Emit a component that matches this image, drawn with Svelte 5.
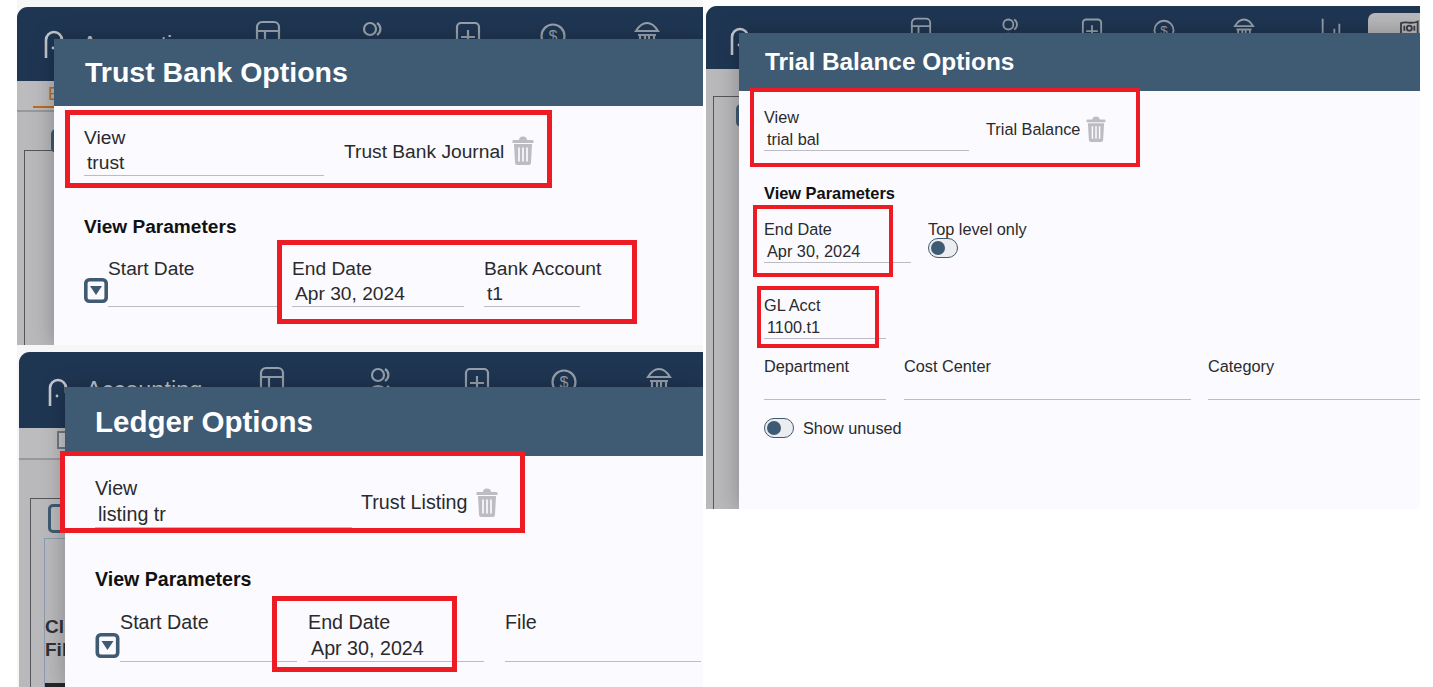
<script>
  const navIcons = ['table', 'people', 'plus', 'dollar', 'bank'];
</script>

{#snippet icon(name)}
  <svg class="nav-icon" viewBox="0 0 26 30" fill="none" stroke="currentColor" stroke-width="2.2">
    {#if name === 'table'}
      <path d="M2 29V7a5 5 0 0 1 5-5h12a5 5 0 0 1 5 5v22M2 11h22M10 11v18" />
    {:else if name === 'people'}
      <circle cx="11" cy="9" r="6" />
      <path d="M18 3a7 7 0 0 1 0 12M2 29a9 9 0 0 1 18 0M20 20a8 8 0 0 1 4 9" />
    {:else if name === 'plus'}
      <path d="M2 29V7a4 4 0 0 1 4-4h14a4 4 0 0 1 4 4v22M13 10v14M6 17h14" />
    {:else if name === 'dollar'}
      <circle cx="13" cy="16" r="11.5" />
      <text x="13" y="22" font-size="16" text-anchor="middle" fill="currentColor" stroke="none">$</text>
    {:else if name === 'bank'}
      <path d="M2 11c3-5 7-8 11-8s8 3 11 8zM4 15h18M6 15v13M11 15v13M15 15v13M20 15v13M2 29h22" />
    {:else if name === 'bars'}
      <path d="M3 2v27M11 20v9M17 14v15M23 8v21" />
    {:else if name === 'money'}
      <path d="M1 5c7-3 12 2 20-2v15c-7 3-13-2-20 1z" />
      <circle cx="11" cy="11" r="3" />
      <path d="M5 8v6M17 8v6" />
    {/if}
  </svg>
{/snippet}

{#snippet logo()}
  <div class="brand">
    <svg class="logo" viewBox="0 0 20 28" fill="none" stroke="#c3c8cd" stroke-width="2.6">
      <path d="M2 28V10a8 8 0 0 1 16 0v5" />
      <circle cx="9" cy="18" r="1.4" fill="#c3c8cd" stroke="none" />
    </svg>
    <span class="app-name">Accounting</span>
  </div>
{/snippet}

{#snippet trash()}
  <svg class="trash" viewBox="0 0 22 29">
    <path d="M7 4a4 3.5 0 0 1 8 0h5.5a1 1 0 0 1 1 1v2h-21V5a1 1 0 0 1 1-1z" fill="#bcbcc2" />
    <path d="M2 8h18l-1 18.500a2.500 2.500 0 0 1-2.500 2.500h-11a2.500 2.500 0 0 1-2.500-2.500z" fill="#bcbcc2" />
    <path d="M7 11.500v14M11 11.500v14M15 11.500v14" stroke="#fafaff" stroke-width="1.7" />
  </svg>
{/snippet}

{#snippet dropBtn()}
  <svg class="drop-btn" viewBox="0 0 24 25">
    <rect x="1.8" y="1.8" width="20.4" height="21.4" rx="3.5" fill="#fafaff" stroke="#3f5a73" stroke-width="3.6" />
    <path d="M6 8h12l-6 9z" fill="#3f5a73" />
  </svg>
{/snippet}

{#snippet field(cls, label, value)}
  <div class="field {cls}">
    <div class="label">{label}</div>
    <div class="value">{value}</div>
  </div>
{/snippet}

{#snippet viewRow(value, title)}
  <div class="view-row">
    {@render field('view', 'View', value)}
    <span class="view-title">{title}</span>
    {@render trash()}
  </div>
{/snippet}

{#snippet toggle()}
  <span class="toggle"><span class="knob"></span></span>
{/snippet}

<div class="canvas">
  <!-- trust bank -->
  <section class="shot s1">
    <div class="app">
      <header class="topbar">
        {@render logo()}
        <nav class="nav">
          {#each navIcons as name}
            {@render icon(name)}
          {/each}
        </nav>
      </header>
      <div class="band"><span class="tab">E</span></div>
      <div class="work"><div class="frame"><span class="peek"></span></div></div>

      <div class="modal">
        <h2 class="modal-title">Trust Bank Options</h2>
        <div class="modal-body">
          {@render viewRow('trust', 'Trust Bank Journal')}
          <h3 class="section">View Parameters</h3>
          <div class="row params">
            {@render dropBtn()}
            {@render field('start', 'Start Date', '')}
            {@render field('end', 'End Date', 'Apr 30, 2024')}
            {@render field('bank', 'Bank Account', 't1')}
          </div>
        </div>
      </div>
    </div>
  </section>

  <!-- ledger -->
  <section class="shot s2">
    <div class="app">
      <header class="topbar">
        {@render logo()}
        <nav class="nav">
          {#each navIcons as name}
            {@render icon(name)}
          {/each}
        </nav>
      </header>
      <div class="band"><span class="grid-glyph"></span></div>
      <div class="work">
        <div class="frame">
          <span class="peek"></span>
          <div class="inner-box">
            <div class="cut-text">Client<br />File</div>
            <div class="black-bar"></div>
          </div>
        </div>
      </div>

      <div class="modal">
        <h2 class="modal-title">Ledger Options</h2>
        <div class="modal-body">
          {@render viewRow('listing tr', 'Trust Listing')}
          <h3 class="section">View Parameters</h3>
          <div class="row params">
            {@render dropBtn()}
            {@render field('start', 'Start Date', '')}
            {@render field('end', 'End Date', 'Apr 30, 2024')}
            {@render field('file', 'File', '')}
          </div>
        </div>
      </div>
    </div>
  </section>

  <!-- trial balance -->
  <section class="shot s3">
    <div class="app">
      <header class="topbar">
        {@render logo()}
        <nav class="nav">
          {#each navIcons as name}
            {@render icon(name)}
          {/each}
          {@render icon('bars')}
          <div class="active-tab">{@render icon('money')}</div>
        </nav>
      </header>
      <div class="work"><div class="frame"><span class="peek"></span></div></div>

      <div class="modal">
        <h2 class="modal-title">Trial Balance Options</h2>
        <div class="modal-body">
          {@render viewRow('trial bal', 'Trial Balance')}
          <h3 class="section">View Parameters</h3>
          <div class="row date-row">
            {@render field('end', 'End Date', 'Apr 30, 2024')}
            <div class="top-level">
              <div class="label">Top level only</div>
              {@render toggle()}
            </div>
          </div>
          <div class="row">{@render field('gl', 'GL Acct', '1100.t1')}</div>
          <div class="row dims">
            {@render field('dept', 'Department', '')}
            {@render field('cost', 'Cost Center', '')}
            {@render field('cat', 'Category', '')}
          </div>
          <div class="unused">
            {@render toggle()}
            <span>Show unused</span>
          </div>
        </div>
      </div>
    </div>
  </section>

  <!-- highlight boxes drawn over the shots -->
  <div class="mark m1"></div>
  <div class="mark m2"></div>
  <div class="mark m3"></div>
  <div class="mark m4"></div>
  <div class="mark thin m5"></div>
  <div class="mark thin m6"></div>
  <div class="mark thin m7"></div>
</div>

<style>
  :global(body) {
    margin: 0;
    background: #fff;
  }

  .canvas {
    position: relative;
    width: 1433px;
    height: 687px;
    overflow: hidden;
    font-family: "Liberation Sans", Arial, sans-serif;
    color: #2a2a2c;
  }

  /* each shot is a pasted crop on a free canvas */
  .shot {
    position: absolute;
    box-sizing: border-box;
    overflow: hidden;
    display: flex;
  }
  .s1 {
    left: 17px;
    top: 0;
    width: 686px;
    height: 348px;
    padding: 7px 0 3px;
    background: #f6f6f6;
  }
  .s2 {
    left: 17px;
    top: 348px;
    width: 686px;
    height: 339px;
    padding: 4px 0 0 2px;
    background: #f6f6f6;
  }
  .s3 {
    left: 706px;
    top: 0;
    width: 714px;
    height: 509px;
    padding-top: 6px;
  }

  .app {
    position: relative;
    flex: 1;
    display: flex;
    flex-direction: column;
    overflow: hidden;
    background: #b9b9bc;
    border-radius: 11px 0 0 0;
  }

  .topbar {
    display: flex;
    align-items: flex-start;
    flex: none;
    box-sizing: border-box;
    background: #1f3653;
    color: #98a1ac;
  }
  .s1 .topbar { height: 74px; padding: 13px 0 0 27px; }
  .s2 .topbar { height: 76px; padding: 14px 0 0 29px; }
  .s3 .topbar { height: 63px; padding: 11px 0 0 24px; }

  .brand {
    display: flex;
    align-items: flex-start;
    flex: none;
    gap: 18px;
  }
  .s1 .brand { width: 211px; margin-top: 10px; }
  .s2 .brand { width: 211px; margin-top: 12px; }
  .s3 .brand { width: 180px; margin-top: 10px; gap: 14px; }

  .logo {
    width: 20px;
    height: 28px;
    flex: none;
  }
  .app-name {
    margin-top: -2px;
    font-size: 23.500px;
    line-height: 28px;
    color: #c3c8cd;
  }
  .s1 .app-name {
    margin-top: 1px;
  }
  .s3 .app-name {
    margin-top: 1px;
    font-size: 20px;
  }

  .nav {
    display: grid;
    align-items: start;
  }
  .s1 .nav { grid-template-columns: 104px 96px 85px 94px 26px; }
  .s2 .nav { grid-template-columns: 108px 97px 87px 95px 27px; }
  .s3 .nav { grid-template-columns: 89px 82px 72px 80px 87px 48px 52px; }

  .nav-icon {
    display: block;
    width: 26px;
    height: 30px;
  }
  .s3 .nav-icon {
    width: 22px;
    height: 25px;
  }

  .active-tab {
    height: 40px;
    margin-top: -4px;
    padding: 6px 0 0 32px;
    box-sizing: border-box;
    background: #b9b9bc;
    color: #3a3f46;
    border-radius: 7px 0 0 0;
  }

  .band {
    flex: none;
    box-sizing: border-box;
    border-bottom: 2px solid #98989b;
    background: #bcbcbf;
  }
  .s1 .band { height: 31px; padding-left: 16px; }
  .s2 .band { height: 32px; padding: 3px 0 0 38px; }

  .tab {
    display: block;
    width: 21px;
    height: 27px;
    padding-left: 15px;
    box-sizing: border-box;
    border-bottom: 2px solid #c26a1c;
    color: #b5702c;
    font-size: 18px;
    line-height: 26px;
  }
  .grid-glyph {
    display: block;
    width: 9px;
    height: 14px;
    border: 2px solid #6c7784;
    background: #c5c5c8;
  }

  .work {
    flex: 1;
    display: flex;
    background: #b9b9bc;
  }
  .s1 .work { padding: 38px 0 0 7px; }
  .s2 .work { padding: 38px 0 0 11px; }
  .s3 .work { padding: 27px 0 0 7px; }

  .frame {
    flex: 1;
    position: relative;
    border: solid #55555a;
    border-width: 1px 0 0 1px;
  }

  /* button that sticks out from behind the dialog */
  .peek {
    display: block;
    box-sizing: border-box;
    border: 3px solid #3f5a73;
    border-radius: 5px;
  }
  .s1 .peek {
    width: 30px;
    height: 24px;
    margin: -22px 0 0 26px;
  }
  .s2 .peek {
    width: 30px;
    height: 29px;
    margin: 5px 0 0 17px;
  }
  .s3 .peek {
    width: 30px;
    height: 23px;
    margin: 7px 0 0 22px;
  }

  .inner-box {
    box-sizing: border-box;
    height: 150px;
    margin: 5px 0 0 13px;
    padding-top: 76px;
    border: solid #8b9cae;
    border-width: 1px 0 0 1px;
  }
  .cut-text {
    color: #2f3135;
    font-size: 19px;
    font-weight: 700;
    line-height: 23px;
    white-space: nowrap;
  }
  .black-bar {
    height: 6px;
    margin-top: 22px;
    background: #26262a;
  }

  /* dialog lies over the app */
  .modal {
    position: absolute;
    right: 0;
    bottom: 0;
    display: flex;
    flex-direction: column;
    background: #fafaff;
    box-shadow: 0 0 22px rgba(0, 0, 0, 0.28);
  }
  .s1 .modal { left: 37px; top: 32px; }
  .s2 .modal { left: 46px; top: 35px; }
  .s3 .modal { left: 33px; top: 27px; }

  .modal-title {
    flex: none;
    margin: 0;
    display: flex;
    align-items: center;
    box-sizing: border-box;
    background: #3f5a73;
    color: #fff;
    font-weight: 700;
  }
  .s1 .modal-title { height: 67px; padding-left: 31px; font-size: 28.5px; }
  .s2 .modal-title { height: 69px; padding-left: 30px; font-size: 29.5px; }
  .s3 .modal-title { height: 58px; padding-left: 26px; font-size: 24.4px; }

  .modal-body {
    flex: 1;
    font-size: var(--fs);
  }
  .s1 .modal-body { --fs: 19.2px; --lab: 25px; --val: 25px; padding: 19px 0 0 30px; }
  .s2 .modal-body { --fs: 19.7px; --lab: 25px; --val: 26px; padding: 20px 0 0 30px; }
  .s3 .modal-body { --fs: 16.3px; --lab: 22px; --val: 22px; padding: 15px 0 0 25px; }

  .field {
    flex: none;
    box-sizing: border-box;
  }
  .label {
    height: var(--lab);
    line-height: var(--lab);
    white-space: nowrap;
  }
  .value {
    box-sizing: border-box;
    height: calc(var(--val) + 1px);
    padding-left: 3px;
    line-height: var(--val);
    border-bottom: 1.5px solid #bcbcc2;
    white-space: nowrap;
  }

  .view-row {
    display: flex;
    align-items: center;
  }
  .s1 .view { width: 240px; margin-right: 20px; }
  .s2 .view { width: 257px; margin-right: 9px; }
  .s3 .view { width: 205px; margin-right: 17px; }

  .view-title {
    white-space: nowrap;
  }
  .s1 .view-title { margin-top: 3px; }
  .s3 .view-title { margin-top: 2px; }
  .trash {
    flex: none;
    width: 22px;
    height: 29px;
    margin-left: 8px;
  }
  .s3 .trash {
    width: 20px;
    height: 26px;
    margin-left: 6px;
  }

  .section {
    margin: 0;
    font-weight: 700;
    color: #111;
    line-height: 22px;
  }
  .s1 .section { margin: 40px 0 18px; font-size: 19.100px; }
  .s2 .section { margin: 40px 0 20px; font-size: 19.600px; }
  .s3 .section { margin: 31px 0 14px; font-size: 16.400px; }

  .row {
    display: flex;
  }
  .params {
    align-items: flex-end;
  }
  .drop-btn {
    flex: none;
    width: 24px;
    height: 25px;
    margin-bottom: 4px;
  }

  .s1 .start { width: 170px; margin-right: 14px; }
  .s1 .end { width: 172px; margin-right: 20px; }
  .s1 .bank { width: 96px; }
  .s2 .drop-btn { width: 25px; }
  .s2 .start { width: 177px; margin-right: 11px; }
  .s2 .end { width: 176px; margin-right: 21px; }
  .s2 .file { width: 196px; }

  .s3 .end { width: 147px; margin-right: 17px; }
  .s3 .gl { width: 122px; margin-top: 31px; }
  .dims { margin-top: 16px; }
  .s3 .dept { width: 122px; margin-right: 18px; }
  .s3 .cost { width: 287px; margin-right: 17px; }
  .s3 .cat { width: 212px; }

  .toggle {
    display: block;
    box-sizing: border-box;
    width: 30px;
    height: 20px;
    padding: 2px;
    border: 1.5px solid #3f5a73;
    border-radius: 10px;
    background: #ecedf1;
  }
  .knob {
    display: block;
    width: 14px;
    height: 14px;
    border-radius: 50%;
    background: #3f5a73;
  }
  .top-level .toggle {
    margin-top: -2px;
  }

  .unused {
    display: flex;
    align-items: center;
    gap: 9px;
    margin-top: 18px;
  }

  /* red annotation rectangles */
  .mark {
    position: absolute;
    box-sizing: border-box;
    border: 5px solid #ed1c24;
  }
  .thin {
    border-width: 4.5px;
  }
  .m1 { left: 65px; top: 110px; width: 487px; height: 78px; }
  .m2 { left: 277px; top: 240px; width: 360px; height: 84px; }
  .m3 { left: 60px; top: 451px; width: 465px; height: 82px; }
  .m4 { left: 272px; top: 596px; width: 185px; height: 76px; }
  .m5 { left: 750px; top: 88px; width: 390px; height: 79px; }
  .m6 { left: 753px; top: 205px; width: 140px; height: 72px; }
  .m7 { left: 757px; top: 286px; width: 122px; height: 62px; }
</style>
